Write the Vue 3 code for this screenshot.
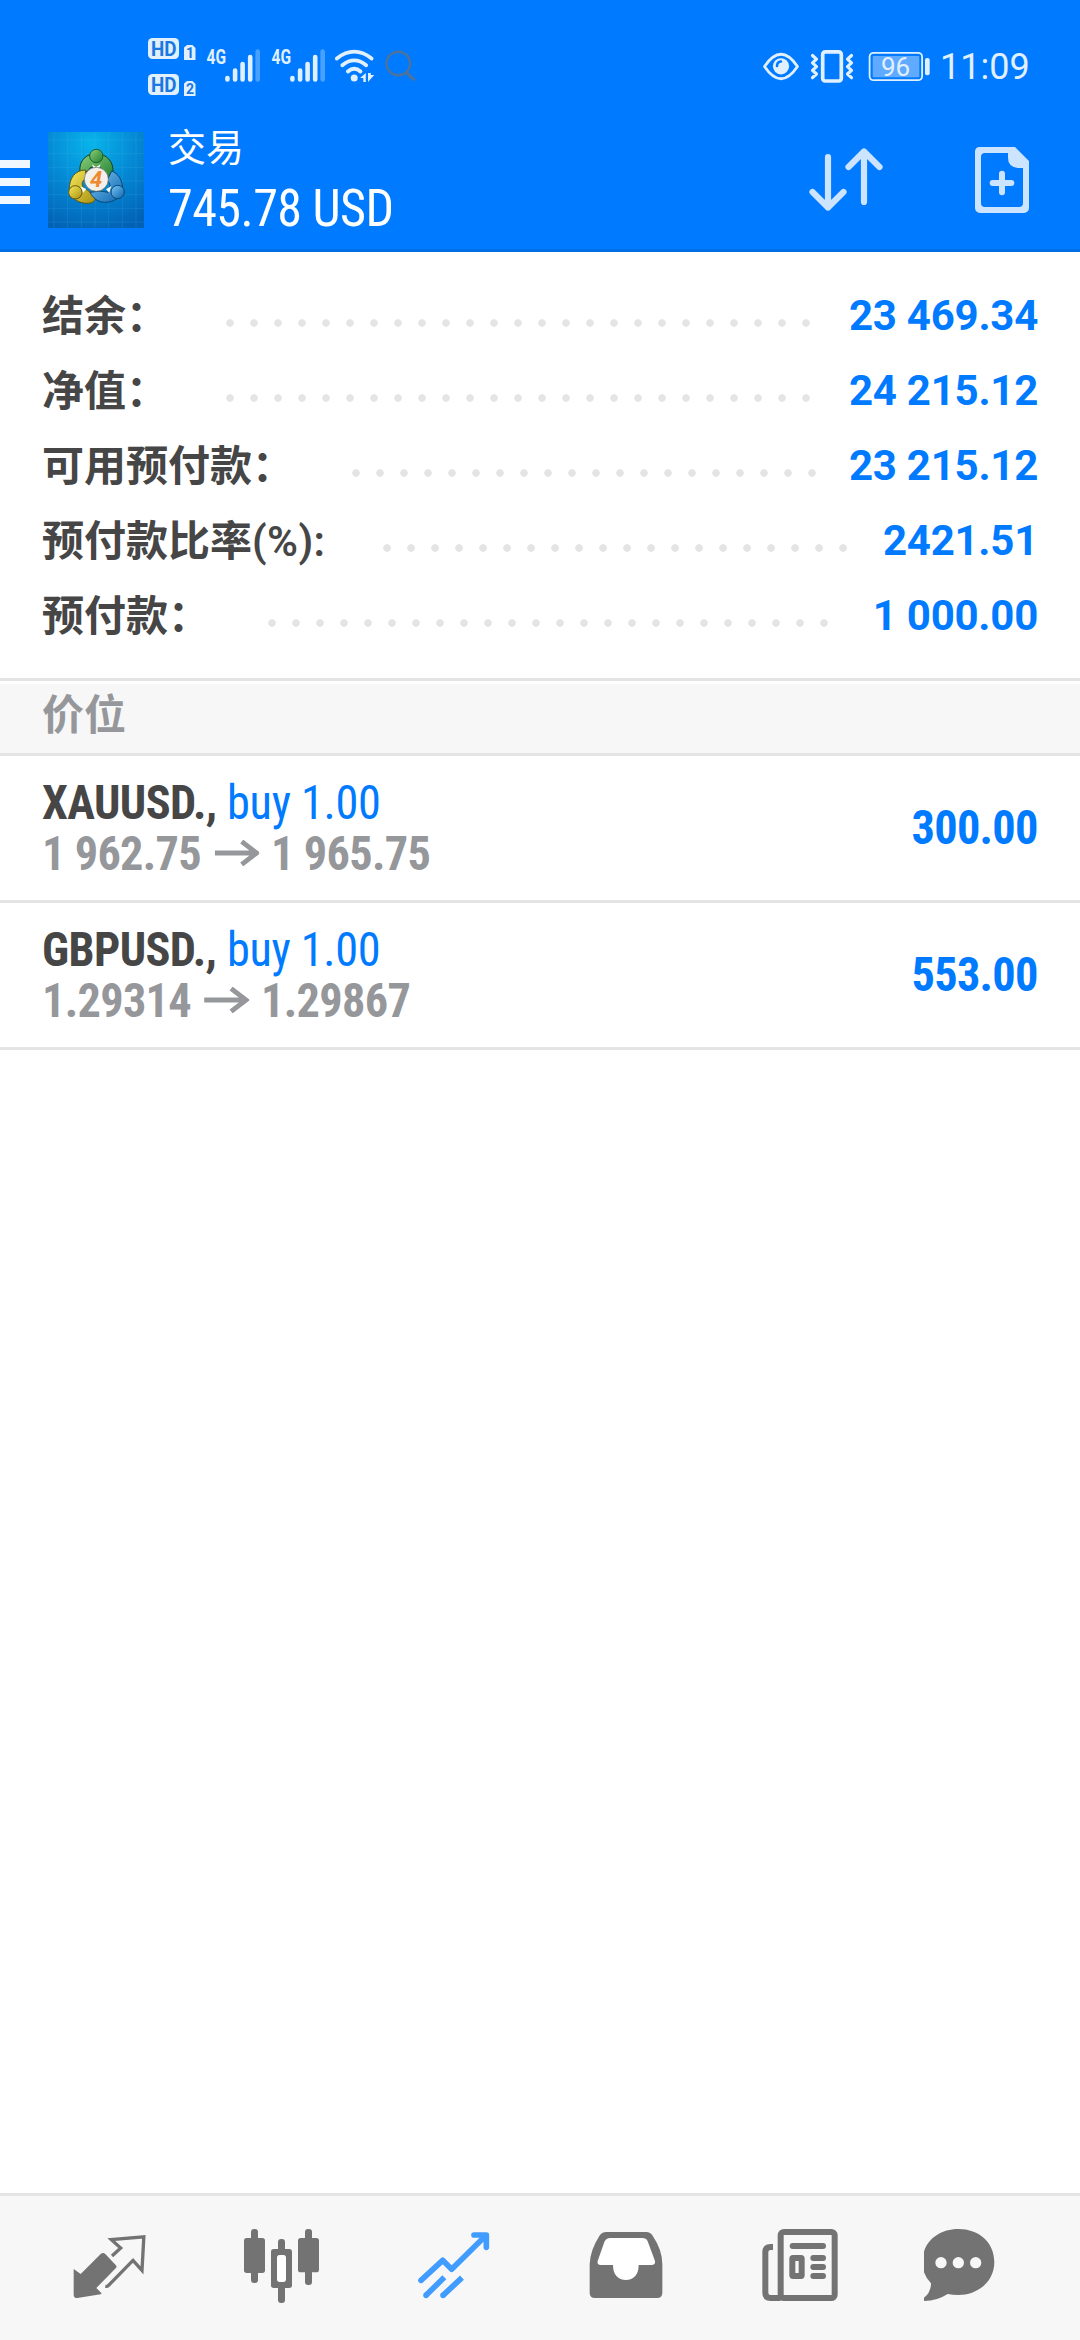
<script setup>
const summary = [
  { label: '结余：', value: '23 469.34' },
  { label: '净值：', value: '24 215.12' },
  { label: '可用预付款：', value: '23 215.12' },
  { label: '预付款比率', suffix: '(%):', value: '2421.51' },
  { label: '预付款：', value: '1 000.00' },
]

const positions = [
  { symbol: 'XAUUSD.,', side: 'buy 1.00', open: '1 962.75', current: '1 965.75', profit: '300.00' },
  { symbol: 'GBPUSD.,', side: 'buy 1.00', open: '1.29314', current: '1.29867', profit: '553.00' },
]

const signals = [0, 65]
</script>

<template>
  <div class="screen">
    <header class="top">
      <div class="status">
        <svg class="status-left" viewBox="140 30 280 75" width="280" height="75">
          <g fill="#e0f0ff">
            <rect x="148" y="38" width="31" height="21" rx="4.5" />
            <path d="M184 47.5l3-2.5h5.5l3 3V60H184z" />
            <rect x="148" y="74" width="31" height="21" rx="4.5" />
            <path d="M184 83.5l3-2.5h5.5l3 3V96H184z" />
          </g>
          <g class="badge">
            <text x="151" y="55.7" font-size="20" textLength="25.5" lengthAdjust="spacingAndGlyphs">HD</text>
            <text x="151" y="91.7" font-size="20" textLength="25.5" lengthAdjust="spacingAndGlyphs">HD</text>
            <text x="186" y="57.7" font-size="14">1</text>
            <text x="186" y="93.7" font-size="14">2</text>
          </g>
          <g v-for="x in signals" :key="x" :transform="`translate(${x} 0)`">
            <text class="net bold" x="206.5" y="64" font-size="20" textLength="19.5" lengthAdjust="spacingAndGlyphs">4G</text>
            <g stroke="#e0f0ff" stroke-width="4.6" stroke-linecap="round">
              <path d="M227.4 78v1.5M235.1 70.6v8.9M242.6 64v15.5M250.2 57v22.5" />
              <path d="M257.7 51.5v28" opacity=".32" />
            </g>
          </g>
          <g fill="none" stroke="#e0f0ff" stroke-width="3.8" stroke-linecap="round">
            <path d="M336.8 58.5Q354.2 44.8 371.6 58.5" />
            <path d="M342.3 65.3Q354.2 55.5 366.2 65.3" />
            <path d="M347.9 71.5Q354.2 65.8 360.5 71.5" />
          </g>
          <circle cx="354.2" cy="77.9" r="3.5" fill="#e0f0ff" />
          <path d="M360 78l5.8-5v9h-2.5v-4zM368 73v9l6.2-7h-3.4V73z" fill="#e0f0ff" />
          <g fill="none" stroke="#4d739c" stroke-width="2.4">
            <circle cx="398.3" cy="63.5" r="11.8" />
            <path d="M406.5 72.5l8 7.8" stroke-width="3.2" />
          </g>
        </svg>
        <svg class="status-right" viewBox="758 40 174 54" width="174" height="54">
          <g fill="none" stroke="#e0f0ff" stroke-width="2.8">
            <path d="M764.5 66.5Q781 42 797.5 66.5Q781 91 764.5 66.5z" stroke-linejoin="round" />
            <rect x="822.7" y="51.8" width="18.6" height="29.2" rx="2.5" stroke-width="3.7" />
            <path d="M812.5 55.5l4 3.7-4 3.7 4 3.7-4 3.7 4 3.7-4 3.7M851.5 55.5l-4 3.7 4 3.7-4 3.7 4 3.7-4 3.7 4 3.7" stroke-width="3.2" stroke-linecap="round" stroke-linejoin="round" />
            <rect x="869.6" y="52.8" width="52.5" height="27.4" rx="4" stroke-width="1.8" />
          </g>
          <circle cx="781" cy="66.3" r="8.1" fill="#e0f0ff" />
          <path d="M777 66q0-4 4-4.5" fill="none" stroke="#007aff" stroke-width="2.5" stroke-linecap="round" />
          <rect x="872.7" y="56" width="46.6" height="21.3" rx="1" fill="#60aaff" />
          <rect x="925" y="58" width="4.7" height="17.3" rx="2" fill="#e0f0ff" />
          <text class="net" x="881" y="75.7" font-size="26">96</text>
        </svg>
        <span class="time">11:09</span>
      </div>

      <div class="bar">
        <div class="burger"><i></i><i></i><i></i></div>
        <svg class="logo" viewBox="144 66 288 288" width="96" height="96">
          <defs>
            <radialGradient id="sky" cx=".45" cy=".12" r=".95">
              <stop offset="0" stop-color="#08b4ea" />
              <stop offset=".5" stop-color="#0488d4" />
              <stop offset="1" stop-color="#0261b4" />
            </radialGradient>
            <linearGradient id="green" x2="1" y2="1">
              <stop offset="0" stop-color="#8ed07c" />
              <stop offset="1" stop-color="#1d7f31" />
            </linearGradient>
            <linearGradient id="gold" x2="1" y2="1">
              <stop offset="0" stop-color="#f6ea5c" />
              <stop offset="1" stop-color="#a98f10" />
            </linearGradient>
            <linearGradient id="blue" x2="1" y2="1">
              <stop offset="0" stop-color="#7cc8f4" />
              <stop offset="1" stop-color="#0b62ae" />
            </linearGradient>
          </defs>
          <path fill="url(#sky)" d="M144 66h288v288H144z" />
          <path d="M162 66v288M203 66v288M244 66v288M285 66v288M326 66v288M367 66v288M408 66v288M144 90h288M144 131h288M144 172h288M144 213h288M144 254h288M144 295h288M144 336h288" stroke="#6fd0ff" stroke-opacity=".2" stroke-width="2" />
          <g stroke="#17401f" stroke-width="3">
            <path d="M240 187C235 150 262 130 289 131C320 132 341 155 339 186C338 204 326 211 314 205L300 172H272L262 184Z" fill="url(#green)" />
            <path d="M257 180C225 180 207 205 208 240C212 264 235 281 264 280C280 279 288 271 286 260L262 240C246 238 240 215 257 205Z" fill="url(#gold)" stroke="#5f5510" />
            <path d="M335 183C354 190 369 210 368 243C361 264 338 278 314 277C294 276 280 266 270 247L300 243L325 247C334 234 330 220 322 210Z" fill="url(#blue)" stroke="#0a4676" />
          </g>
          <path d="M276 163l12 8 14-8-6 15h-14zM241 229l18 8-10 12zM334 228l-16 10 10 10z" fill="#f7fbf0" />
          <circle cx="289" cy="138" r="20" fill="url(#green)" stroke="#1c5c28" stroke-width="3" />
          <circle cx="226" cy="247" r="20" fill="url(#gold)" stroke="#65580c" stroke-width="3" />
          <circle cx="353" cy="246" r="20" fill="url(#blue)" stroke="#0a4676" stroke-width="3" />
          <circle cx="289" cy="208" r="36" fill="#f3efeb" stroke="#5c6656" stroke-width="2" />
          <text x="270" y="231" font-size="66" class="four">4</text>
        </svg>
        <div class="heading">
          <div class="title">交易</div>
          <div class="total">745.78 USD</div>
        </div>
        <svg class="sort" viewBox="806 144 80 72" width="80" height="72" fill="none" stroke="#cce4ff" stroke-width="6.2" stroke-linecap="round" stroke-linejoin="round">
          <path d="M828 157v50.5M812.5 192l15.5 15.5L843.5 192M864 202V151.5M848.5 167l15.5-15.5L879.5 167" />
        </svg>
        <svg class="doc" viewBox="972 144 60 72" width="60" height="72">
          <path d="M979 147h36l14 14v47a5 5 0 0 1-5 5h-44a5 5 0 0 1-5-5v-56a5 5 0 0 1 4-5zM1008 153h-23a4 4 0 0 0-4 4v46a4 4 0 0 0 4 4h34a4 4 0 0 0 4-4v-35h-5q-10-1-10-10z" fill="#cce4ff" fill-rule="evenodd" />
          <path d="M992.7 183h18.6M1002 173.7v18.6" stroke="#cce4ff" stroke-width="6" stroke-linecap="round" />
        </svg>
      </div>
    </header>

    <section class="summary">
      <div v-for="row in summary" :key="row.label" class="row">
        <span class="label">{{ row.label }}<span v-if="row.suffix" class="suffix">{{ row.suffix }}</span></span>
        <span class="dots"></span>
        <span class="value">{{ row.value }}</span>
      </div>
    </section>

    <div class="section-title">价位</div>

    <section>
      <div v-for="p in positions" :key="p.symbol" class="position">
        <div class="info">
          <div class="line"><b class="symbol">{{ p.symbol }}</b> <span class="side">{{ p.side }}</span></div>
          <div class="line prices">
            <span>{{ p.open }}</span>
            <svg class="arrow" viewBox="0 0 45 26" preserveAspectRatio="none"><path d="M0 13h42M27 1.5L42 13 27 24.5" fill="none" stroke="#96979b" stroke-width="4.8" /></svg>
            <span>{{ p.current }}</span>
          </div>
        </div>
        <div class="profit">{{ p.profit }}</div>
      </div>
    </section>

    <nav class="tabs">
      <div class="tab">
        <svg viewBox="61 120 288 288">
          <path d="M102 267l21 15 60-60q7-6 14 0l31 33q5 5 0 10l-58 59 15 15q1 3-2 4l-70 11q-11 0-11-10z" fill="#737373" />
          <path d="M217 228L243 204 215 179 312.5 170.5 307 271 280 241 206 317Q203 320 197 319" fill="none" stroke="#737373" stroke-width="10" />
        </svg>
      </div>
      <div class="tab">
        <svg viewBox="579 120 288 288" fill="#737373">
          <rect x="633" y="147" width="21" height="162" rx="9" /><rect x="612" y="174" width="63" height="105" rx="8" />
          <rect x="714" y="177" width="21" height="192" rx="9" /><rect x="693" y="207" width="63" height="117" rx="8" />
          <rect x="711" y="225" width="27" height="81" rx="8" fill="#fff" />
          <rect x="795" y="147" width="21" height="168" rx="9" /><rect x="774" y="174" width="63" height="103" rx="8" />
        </svg>
      </div>
      <div class="tab">
        <svg viewBox="47 120 288 288" fill="none" stroke="#419cff" stroke-width="17" stroke-linejoin="round">
          <path d="M92 301L157 241 184 268 285 168M251 165H288V202" stroke-linecap="round" />
          <path d="M107 346L162 292M158 346L215 293" />
          <path d="M107 346h.1M158 346h.1" stroke-linecap="round" />
        </svg>
      </div>
      <div class="tab">
        <svg viewBox="565 120 288 288">
          <path d="M650 156H770Q782 156 789 167Q818 210 818 252V338Q818 354 802 354H616Q600 354 600 338V252Q602 210 629 168Q636 156 650 156Z" fill="#737373" />
          <path d="M662 174H757Q770 174 774 184L796 243Q798 255 785 255H747C747 284 732 300 709 300C685 300 670 284 670 255H634Q621 255 624 243L644 186Q649 174 662 174Z" fill="#fff" />
        </svg>
      </div>
      <div class="tab">
        <svg viewBox="63 120 288 288" fill="none" stroke="#737373" stroke-width="18">
          <rect x="152" y="156" width="162" height="198" rx="10" />
          <path d="M129 201H122Q106 201 106 216V338Q106 354 122 354H152" />
          <path d="M188 198H279M250 234H279M250 261H279M250 288H279" stroke-linecap="round" />
          <rect x="187" y="234" width="28" height="54" rx="2" />
        </svg>
      </div>
      <div class="tab">
        <svg viewBox="581 120 288 288">
          <path d="M684 147C747 147 792 188 792 246C792 305 742 345 684 345Q668 345 652 342Q620 363 580 363Q573 361 579 355Q602 338 602 310Q576 283 576 246C576 188 622 147 684 147Z" fill="#737373" />
          <g fill="#f7f7f7"><circle cx="632" cy="248" r="17" /><circle cx="684" cy="248" r="17" /><circle cx="736" cy="248" r="17" /></g>
        </svg>
      </div>
    </nav>
  </div>
</template>

<style>
body {
  background: #fff;
}
</style>

<style scoped>
.screen {
  display: flex;
  flex-direction: column;
  width: 1080px;
  height: 2340px;
  overflow: hidden;
  background: #fff;
  font-family: Roboto, "Noto Sans CJK SC", sans-serif;
}
svg {
  display: block;
  flex: none;
}
.top {
  height: 249px;
  flex: none;
  background: #007aff;
  border-bottom: 3px solid #006fe6;
}
.status {
  display: flex;
  height: 120px;
}
.status-left {
  margin: 30px 0 0 140px;
}
.status-right {
  margin: 40px 0 0 338px;
}
.badge {
  fill: #1a78e0;
  font-weight: 700;
}
.net {
  fill: #e0f0ff;
}
.bold {
  font-weight: 700;
}
.time {
  margin: 46px 0 0 8px;
  font-size: 36px;
  line-height: 42px;
  color: #e0f0ff;
}
.bar {
  display: flex;
  height: 129px;
}
.burger {
  display: flex;
  flex-direction: column;
  gap: 10px;
  width: 30px;
  margin-top: 40px;
}
.burger i {
  height: 8px;
  background: #f0f7ff;
}
.logo {
  margin: 12px 0 0 18px;
}
.four {
  fill: #ee8a2c;
  font-weight: 700;
  font-style: italic;
}
.heading {
  width: 638px;
  margin-left: 24px;
  color: #fff;
}
.title {
  margin-top: 5px;
  font-size: 38px;
  line-height: 46px;
}
.total {
  margin-top: 8px;
  font-size: 51px;
  line-height: 60px;
  letter-spacing: -0.011em;
  white-space: nowrap;
  transform: scaleX(0.982);
  transform-origin: left;
}
.total,
.position {
  font-family: "Roboto Condensed", Roboto, sans-serif;
  font-stretch: 75%;
}
.sort {
  margin-top: 24px;
}
.doc {
  margin: 24px 0 0 86px;
}
.summary {
  height: 426px;
  box-sizing: border-box;
  padding: 27px 42px 0;
  flex: none;
}
.row {
  display: flex;
  height: 75px;
  font-size: 42px;
  line-height: 75px;
  font-weight: 700;
  white-space: nowrap;
}
.label {
  color: #464646;
}
.suffix {
  font-weight: 600;
  letter-spacing: 0.4px;
}
.dots {
  flex: 1;
  height: 8px;
  margin: 40px 30px 0 58px;
  background: radial-gradient(circle at 4px 4px, #e4e4e4 3.4px, transparent 4.1px) 0 0 / 24px 8px repeat-x;
}
.value {
  color: #007aff;
  font-weight: 700;
  letter-spacing: -0.25px;
  line-height: 73px;
}
.section-title {
  height: 72px;
  flex: none;
  padding-left: 42px;
  border-top: 3px solid #e4e4e4;
  border-bottom: 3px solid #e4e4e4;
  box-shadow: inset 0 3px #fff;
  background: #f7f7f7;
  color: #96979b;
  font-size: 42px;
  line-height: 69px;
  font-weight: 700;
}
.position {
  display: flex;
  justify-content: space-between;
  height: 144px;
  padding: 0 42px;
  border-bottom: 3px solid #e4e4e4;
  font-size: 48px;
}
.info {
  padding-top: 21px;
}
.line {
  height: 51px;
  line-height: 51px;
  white-space: nowrap;
  color: #464646;
  transform: scaleX(0.965);
  transform-origin: left;
}
.symbol {
  letter-spacing: -0.013em;
}
.side {
  color: #007aff;
  letter-spacing: -0.007em;
}
.prices {
  display: flex;
  color: #96979b;
  font-weight: 700;
  letter-spacing: -0.015em;
}
.arrow {
  width: 46.6px;
  height: 26px;
  margin: 12px 12px 0 14px;
}
.profit {
  line-height: 144px;
  font-weight: 700;
  color: #007aff;
  letter-spacing: -0.016em;
  transform: scaleX(0.965);
  transform-origin: right;
}
.tabs {
  display: flex;
  height: 144px;
  flex: none;
  margin-top: auto;
  padding: 0 22px;
  border-top: 3px solid #e4e4e4;
  background: #f7f7f7;
}
.tab {
  flex: 1;
  display: flex;
  align-items: center;
  justify-content: center;
}
.tab svg {
  width: 96px;
  height: 96px;
}
</style>
